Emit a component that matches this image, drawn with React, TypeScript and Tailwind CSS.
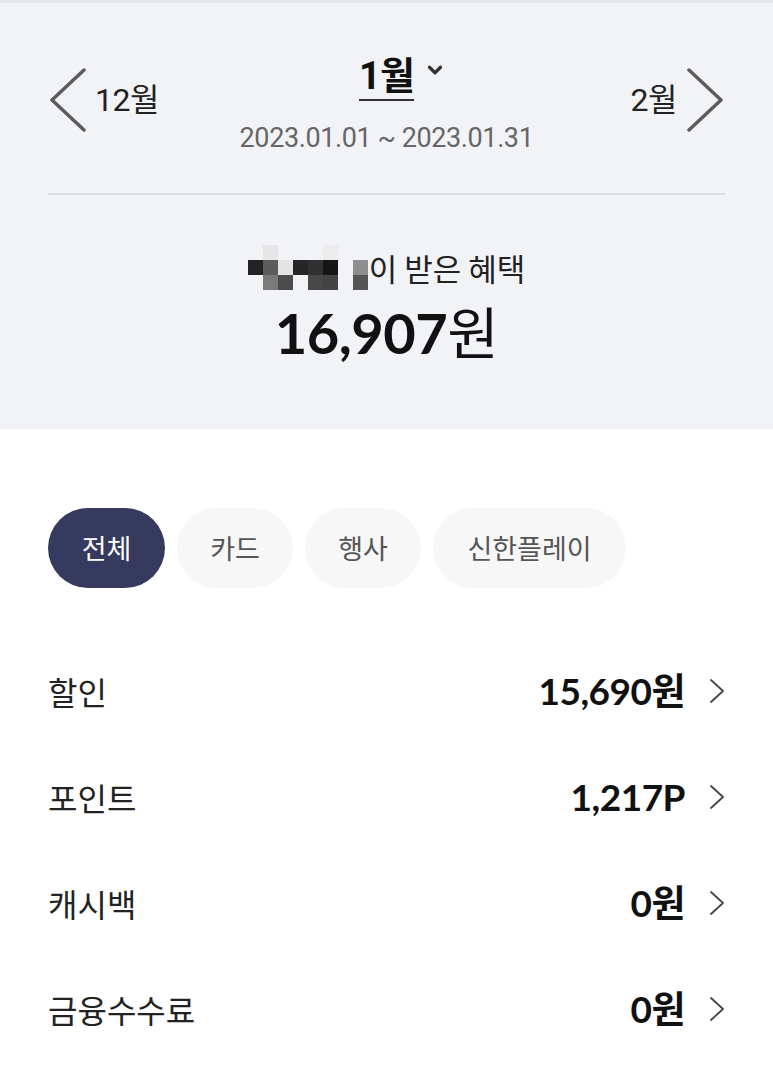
import { ChevronDown } from 'lucide-react';

const MOSAIC: string[][] = [
  ['', '#e6e6e6', '', '', '', '#ececec', '', ''],
  ['#232323', '#5c5c5c', '#e4e4e4', '#262626', '#303030', '#161616', '', '#8e8e8e'],
  ['', '#7a7a7a', '#4c4c4c', '', '#484848', '#434343', '', '#555555'],
];

const TABS = [
  { label: '전체', width: 'w-[117px]' },
  { label: '카드', width: 'w-[116px]' },
  { label: '행사', width: 'w-[116px]' },
  { label: '신한플레이', width: 'w-[193px]' },
];

const ROWS = [
  { label: '할인', value: '15,690원' },
  { label: '포인트', value: '1,217P' },
  { label: '캐시백', value: '0원' },
  { label: '금융수수료', value: '0원' },
];

const navFont = { fontFamily: 'Roboto, "Noto Sans CJK KR", sans-serif' };
const krFont = { fontFamily: '"Noto Sans CJK KR", "Noto Sans", sans-serif' };
const numFont = { fontFamily: 'Lato, "Noto Sans CJK KR", sans-serif' };

function BigChevron({ dir }: { dir: 'left' | 'right' }) {
  return (
    <svg width="40" height="64" viewBox="0 0 40 64" fill="none">
      <path
        d={dir === 'left' ? 'M36 2 L4 32 L36 62' : 'M4 2 L36 32 L4 62'}
        stroke="#5c5c5c"
        strokeWidth="3.5"
        strokeLinecap="round"
        strokeLinejoin="round"
      />
    </svg>
  );
}

function SmallChevron() {
  return (
    <svg width="16" height="26" viewBox="0 0 16 26" fill="none">
      <path d="M2 2 L14 13 L2 24" stroke="#444" strokeWidth="1.8" strokeLinecap="round" strokeLinejoin="round" />
    </svg>
  );
}

function Mosaic() {
  return (
    <div className="flex flex-col">
      {MOSAIC.map((row, r) => (
        <div key={r} className="flex">
          {row.map((c, i) => (
            <div key={i} className="w-[15px] h-[15px]" style={{ backgroundColor: c || 'transparent' }} />
          ))}
        </div>
      ))}
    </div>
  );
}

export default function App() {
  return (
    <div className="w-[773px] min-h-[1082px] bg-white">
      <div className="bg-[#f2f3f7] border-t-[3px] border-[#e6e7eb] px-12 pt-[50px] pb-[64px]">
        <div className="grid grid-cols-[1fr_auto_1fr] items-start">
          <div className="flex items-center gap-[7px] pt-[15px] text-[#222]" style={navFont}>
            <BigChevron dir="left" />
            <span className="text-[32px] leading-[40px] tracking-[-0.5px]">12월</span>
          </div>
          <div className="flex flex-col items-center" style={navFont}>
            <div className="relative flex items-center">
              <span className="text-[38px] leading-[46px] font-bold text-[#111] border-b-2 border-[#333] tracking-[-1px]">
                1월
              </span>
              <ChevronDown className="absolute -right-[32px] top-[6px] w-[22px] h-[22px] text-[#333]" strokeWidth={3.5} />
            </div>
            <span className="mt-[22px] text-[27px] leading-[30px] text-[#666] tracking-[-0.4px]">
              2023.01.01 ~ 2023.01.31
            </span>
          </div>
          <div className="flex items-center justify-end gap-[8px] pt-[15px] text-[#222]" style={navFont}>
            <span className="text-[32px] leading-[40px] tracking-[-0.5px]">2월</span>
            <BigChevron dir="right" />
          </div>
        </div>

        <div className="mt-[40px] h-[2px] bg-[#dcdde1]" />

        <div className="mt-[50px] flex items-center justify-center" style={krFont}>
          <Mosaic />
          <span className="ml-[1px] text-[31px] leading-[40px] text-[#222]">이 받은 혜택</span>
        </div>
        <div className="mt-[8px] flex justify-center text-[#111]">
          <span className="text-[56px] leading-[64px] font-bold tracking-[-0.5px]" style={numFont}>
            16,907<span className="font-normal" style={krFont}>원</span>
          </span>
        </div>
      </div>

      <div className="px-12 pt-[79px]">
        <div className="flex gap-3" style={krFont}>
          {TABS.map((t, i) => (
            <button
              key={t.label}
              className={`${t.width} h-[80px] rounded-full text-[27px] ${
                i === 0 ? 'bg-[#363a5e] text-white' : 'bg-[#f7f7f7] text-[#555]'
              }`}
            >
              {t.label}
            </button>
          ))}
        </div>

        <div className="mt-[50px]">
          {ROWS.map((row) => (
            <div key={row.label} className="h-[106px] flex items-center justify-between">
              <span className="text-[32px] text-[#222]" style={krFont}>
                {row.label}
              </span>
              <div className="flex items-center gap-[24px]">
                <span className="text-[37px] font-bold text-[#111] tracking-[-0.5px]" style={numFont}>
                  {row.value}
                </span>
                <SmallChevron />
              </div>
            </div>
          ))}
        </div>
      </div>
    </div>
  );
}
